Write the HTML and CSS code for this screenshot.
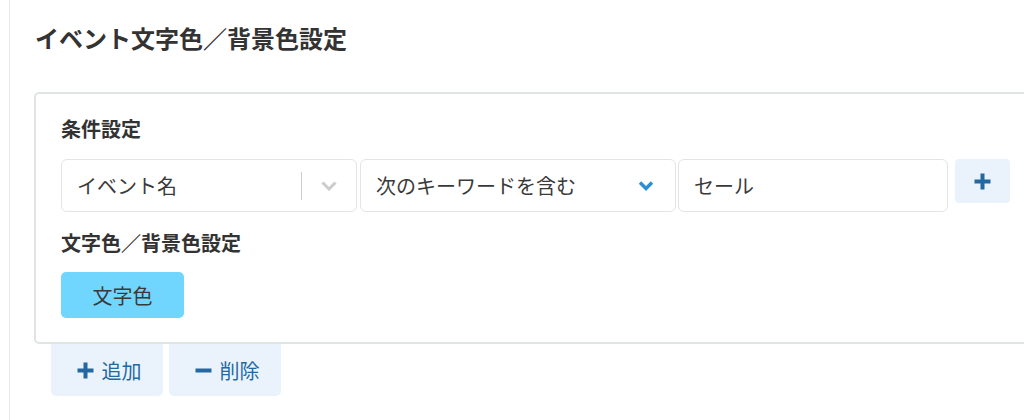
FILE: index.html
```html
<!DOCTYPE html>
<html lang="ja">
<head>
<meta charset="utf-8">
<link rel="stylesheet" href="styles.css">
</head>
<body>
<main class="main">
  <h1 class="title">イベント文字色／背景色設定</h1>
  <section class="card">
    <h2 class="label">条件設定</h2>
    <div class="cond-row">
      <div class="field select-a">
        <span class="field-text">イベント名</span>
        <span class="sep"></span>
        <svg class="chev" width="16" height="10" viewBox="0 0 16 10"><path d="M1.5 1.5 L8 8 L14.5 1.5" fill="none" stroke="#cccccc" stroke-width="3"/></svg>
      </div>
      <div class="field select-b">
        <span class="field-text">次のキーワードを含む</span>
        <svg class="chev-blue" width="16" height="10" viewBox="0 0 16 10"><path d="M2 1.5 L8 7.5 L14 1.5" fill="none" stroke="#2b8fd6" stroke-width="3.4"/></svg>
      </div>
      <div class="field input-c">
        <span class="field-text">セール</span>
      </div>
      <button class="btn-plus" type="button">
        <svg width="17" height="17" viewBox="0 0 17 17"><path d="M8.5 0.5 V16.5 M0.5 8.5 H16.5" stroke="#2468a2" stroke-width="4"/></svg>
      </button>
    </div>
    <h2 class="label label-2">文字色／背景色設定</h2>
    <button class="btn-color" type="button">文字色</button>
  </section>
  <div class="actions">
    <button class="btn-act" type="button">
      <svg width="17" height="17" viewBox="0 0 17 17"><path d="M8.5 0.5 V16.5 M0.5 8.5 H16.5" stroke="#2468a2" stroke-width="4"/></svg>
      <span>追加</span>
    </button>
    <button class="btn-act" type="button">
      <svg width="17" height="17" viewBox="0 0 17 17"><path d="M0.5 8.5 H16.5" stroke="#2468a2" stroke-width="4"/></svg>
      <span>削除</span>
    </button>
  </div>
</main>
</body>
</html>
```
FILE: styles.css
```css
html, body {
  margin: 0;
  padding: 0;
  background: #ffffff;
  overflow: hidden;
}
body {
  font-family: "Noto Sans CJK JP", "Noto Sans", sans-serif;
  color: #333333;
  width: 1024px;
  height: 420px;
}
.main {
  margin-left: 9px;
  border-left: 1px solid #e9e9e9;
  padding-left: 24px;
  padding-top: 20px;
  height: 420px;
  box-sizing: border-box;
}
.title {
  margin: 0 0 0 1px;
  font-size: 24px;
  line-height: 36px;
  font-weight: bold;
  color: #333333;
}
.card {
  margin-top: 36px;
  width: 1040px;
  border: 2px solid #e1e4e4;
  border-radius: 5px;
  padding: 20px 25px 24px 25px;
  box-sizing: border-box;
}
.label {
  margin: 0;
  font-size: 20px;
  line-height: 30px;
  font-weight: bold;
  color: #333333;
}
.label-2 {
  margin-top: 16px;
}
.cond-row {
  display: flex;
  align-items: flex-start;
  margin-top: 15px;
}
.field {
  display: flex;
  align-items: center;
  height: 53px;
  box-sizing: border-box;
  border: 1px solid #e4e4e4;
  border-radius: 6px;
  padding-left: 15px;
  font-size: 20px;
  color: #3a3a3a;
}
.field-text {
  flex: 1;
}
.select-a {
  width: 296px;
}
.select-b {
  width: 316px;
  margin-left: 3px;
}
.input-c {
  width: 270px;
  margin-left: 2px;
}
.sep {
  width: 1px;
  height: 28px;
  background: #cccccc;
  margin-right: 19px;
}
.chev {
  margin-right: 19px;
}
.chev-blue {
  margin-right: 21px;
}
.btn-plus {
  margin-left: 7px;
  width: 55px;
  height: 44px;
  border: none;
  border-radius: 4px;
  background: #eaf3fb;
  display: flex;
  align-items: center;
  justify-content: center;
  padding: 0;
}
.btn-color {
  margin-top: 14px;
  width: 123px;
  height: 46px;
  border: none;
  border-radius: 5px;
  background: #70d6fe;
  font-family: inherit;
  font-size: 20px;
  color: #3a3a3a;
  padding: 0;
  display: block;
}
.actions {
  display: flex;
  gap: 6px;
  margin-left: 17px;
}
.btn-act {
  width: 112px;
  height: 52px;
  border: none;
  border-radius: 0 0 5px 5px;
  background: #eaf3fb;
  display: flex;
  align-items: center;
  justify-content: center;
  gap: 8px;
  font-family: inherit;
  font-size: 20px;
  color: #2468a2;
  padding: 0 0 0 4px;
}
```
